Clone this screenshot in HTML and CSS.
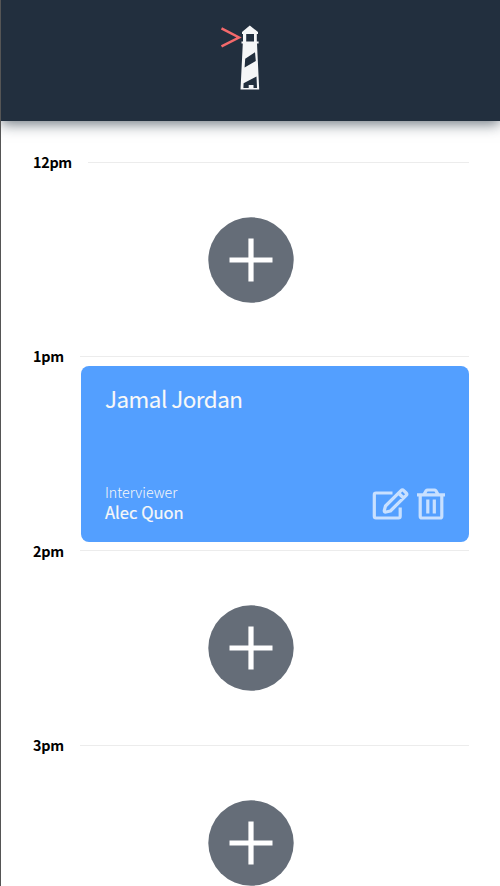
FILE: index.html
```html
<!DOCTYPE html>
<html lang="en">
<head>
<meta charset="utf-8">
<title>Interview Scheduler</title>
<link rel="stylesheet" href="styles.css">
</head>
<body>
<header class="topbar">
  <svg class="logo" width="42" height="68" viewBox="0 0 42 68" aria-hidden="true">
    <path d="M1.5 5.4L19 14.5L1.5 23.4" fill="none" stroke="#f4696b" stroke-width="2.5"/>
    <path fill="#f5f6f7" fill-rule="evenodd" d="M29.8 2.5L38 9V11H36.8V18.5H38.6V20.5H37L39.2 66.5H20.5L22.8 20.5H21.5V18.5H23V11H22V9ZM26.2 11V18.5H34V11ZM25.2 35.8L35 29.3L35.8 38L24.6 44.6ZM23.6 60.2L36.5 53.5L37 65H33.5V62H28.7V65H23.4Z"/>
  </svg>
</header>
<main class="schedule">
  <section class="slot">
    <div class="slot-head"><h4 class="time">12pm</h4><hr class="rule"></div>
    <div class="slot-body empty"><button class="add" aria-label="Add"><svg width="86" height="86" viewBox="0 0 86 86"><circle cx="43" cy="43" r="42.7"/><path d="M43 21.5V64.5M21.5 43H64.5"/></svg></button></div>
  </section>
  <section class="slot">
    <div class="slot-head"><h4 class="time">1pm</h4><hr class="rule"></div>
    <article class="slot-body card">
      <h2 class="student">Jamal Jordan</h2>
      <div class="card-foot">
        <div>
          <h4 class="role">Interviewer</h4>
          <h3 class="interviewer">Alec Quon</h3>
        </div>
        <div class="actions">
          <svg width="37" height="34" viewBox="0 0 37 34"><path d="M20.5 6H4Q2.3 6 2.3 7.7V29.3Q2.3 31 4 31H26.5Q28.2 31 28.2 29.3V20.5"/><path d="M13.5 19L29 3.6Q30.4 2.2 31.8 3.6L34.2 6Q35.4 7.2 34.2 8.4L18.4 24L14 25Q12 25.3 12.3 23.4ZM26.5 6L31.5 11"/></svg>
          <svg width="28" height="34" viewBox="0 0 28 34"><path d="M0 7.8H28M3.2 8V29.2Q3.2 31 5 31H23Q24.8 31 24.8 29.2V8M7.2 7L9.2 3.7Q9.7 3 10.5 3H17.5Q18.3 3 18.8 3.7L20.8 7M10.8 12.5V26.5M17.3 12.5V26.5"/></svg>
        </div>
      </div>
    </article>
  </section>
  <section class="slot">
    <div class="slot-head"><h4 class="time">2pm</h4><hr class="rule"></div>
    <div class="slot-body empty"><button class="add" aria-label="Add"><svg width="86" height="86" viewBox="0 0 86 86"><circle cx="43" cy="43" r="42.7"/><path d="M43 21.5V64.5M21.5 43H64.5"/></svg></button></div>
  </section>
  <section class="slot">
    <div class="slot-head"><h4 class="time">3pm</h4><hr class="rule"></div>
    <div class="slot-body empty"><button class="add" aria-label="Add"><svg width="86" height="86" viewBox="0 0 86 86"><circle cx="43" cy="43" r="42.7"/><path d="M43 21.5V64.5M21.5 43H64.5"/></svg></button></div>
  </section>
</main>
</body>
</html>
```
FILE: styles.css
```css
* { box-sizing: border-box; margin: 0; padding: 0; }
html, body { height: 100%; overflow: hidden; }
body {
  background: #fff;
  border-left: 1px solid #555;
  font-family: "Noto Sans CJK SC", "Noto Sans", sans-serif;
}
.topbar {
  height: 121px;
  padding: 23px 0 0 219px;
  background: #222f3e;
  box-shadow: 0 3px 13px rgba(34, 47, 62, .65);
}
.logo { display: block; }
.schedule { height: 765px; overflow: hidden; padding: 32px 31px 0 32px; }
.slot { height: 194.4px; }
.slot-head {
  display: flex;
  align-items: center;
  gap: 16px;
  height: 18px;
}
.time { font-size: 14.4px; line-height: 18px; font-weight: 700; letter-spacing: -.3px; color: #000; }
.rule { flex: 1; border: 0; height: 1px; background: #ececec; }
.slot-body { height: 176.4px; }
.empty { display: flex; justify-content: center; align-items: center; padding-top: 1px; }
.add { border: 0; background: none; width: 86px; height: 86px; margin-right: 1px; }
.add svg { display: block; }
.add circle { fill: #656d78; }
.add path { stroke: #fff; stroke-width: 5.2; }
.card {
  display: flex;
  flex-direction: column;
  justify-content: space-between;
  height: 176px;
  margin: .6px 0 0 48px;
  padding: 17px 24px 19px;
  border-radius: 8px;
  background: #539fff;
  color: #f8f8f8;
}
.student { font-size: 22.4px; line-height: 30px; font-weight: 400; letter-spacing: -.5px; -webkit-text-stroke: .1px; }
.card-foot { display: flex; justify-content: space-between; align-items: flex-end; }
.role { font-size: 14.2px; line-height: 21px; font-weight: 300; }
.interviewer { font-size: 16.6px; line-height: 19px; padding-bottom: 1px; font-weight: 400; -webkit-text-stroke: .2px; }
.actions { display: flex; gap: 8px; padding-bottom: 2px; }
.actions svg { fill: none; stroke: #c8e0ff; stroke-width: 3.2; stroke-linejoin: round; }
```
